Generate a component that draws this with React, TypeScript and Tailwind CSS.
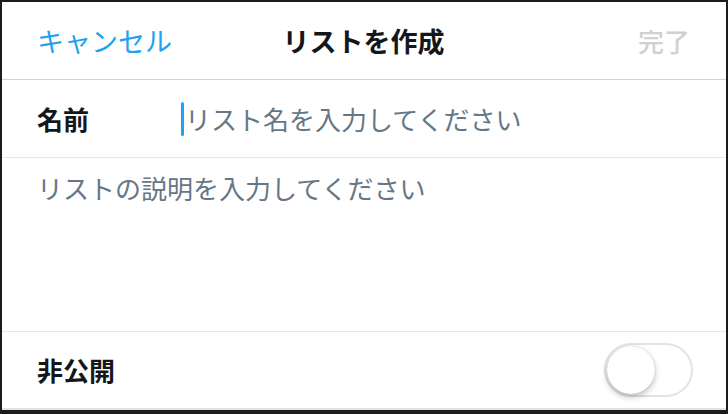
export default function App() {
  return (
    <div
      className="flex h-[414px] w-[728px] flex-col overflow-hidden border-t-2 border-r-2 border-b-4 border-l-2 border-[#1c1c1c] bg-white"
      style={{ fontFamily: '"Noto Sans CJK JP", "Noto Sans", sans-serif' }}
    >
      {/* Header */}
      <header className="grid h-[78px] shrink-0 grid-cols-[1fr_auto_1fr] items-center border-b border-[#ccd3da] pr-[36px] pl-[35px]">
        <button className="justify-self-start text-[27px] leading-none text-[#1da1f2]">キャンセル</button>
        <h1 className="text-[27px] leading-none font-bold text-[#14171a]">リストを作成</h1>
        <button className="justify-self-end text-[26px] leading-none font-medium text-[#d0d0d0]">完了</button>
      </header>

      {/* Name row */}
      <div className="flex h-[78px] shrink-0 items-center border-b border-[#e1e8ed] pl-[35px]">
        <span className="w-[144px] text-[26px] leading-none font-bold text-[#14171a]">名前</span>
        <div className="flex items-center">
          <span className="mr-[1px] h-[34px] w-[3px] rounded-full bg-[#1da1f2]" />
          <span className="text-[26px] leading-none text-[#657786]">リスト名を入力してください</span>
        </div>
      </div>

      {/* Description */}
      <div className="flex-1 border-b border-[#e1e8ed] pt-[17px] pl-[35px]">
        <span className="text-[26px] leading-none text-[#657786]">リストの説明を入力してください</span>
      </div>

      {/* Private row */}
      <div className="flex h-[78px] shrink-0 items-center justify-between border-b-2 border-[#dfe3e8] pr-[33px] pl-[35px]">
        <span className="text-[26px] leading-none font-bold text-[#14171a]">非公開</span>
        <div className="relative h-[54px] w-[89px] rounded-full border-2 border-[#e3e3e3] bg-white">
          <span className="absolute top-[1px] left-[1px] h-[48px] w-[48px] rounded-full bg-white shadow-[0_3px_6px_rgba(0,0,0,0.25),0_0_1px_rgba(0,0,0,0.3)]" />
        </div>
      </div>
    </div>
  );
}
